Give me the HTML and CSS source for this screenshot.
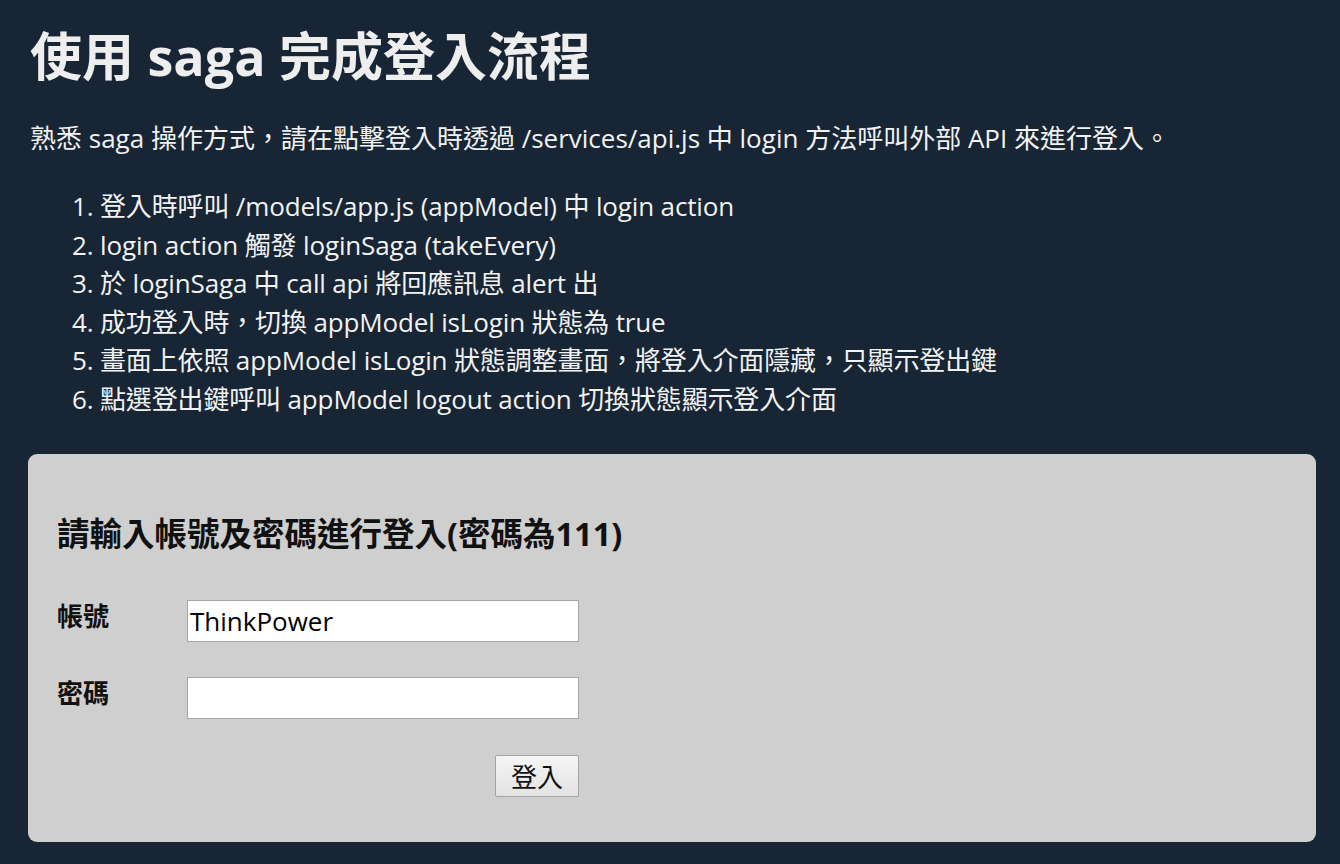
FILE: index.html
```html
<!DOCTYPE html>
<html lang="zh-Hant">
<head>
<meta charset="utf-8">
<title>使用 saga 完成登入流程</title>
<link rel="stylesheet" href="styles.css">
</head>
<body>
<main class="page">
  <h1 class="title">使用 saga 完成登入流程</h1>
  <p class="intro">熟悉 saga 操作方式，請在點擊登入時透過 /services/api.js 中 login 方法呼叫外部 API 來進行登入。</p>
  <ol class="steps">
    <li>登入時呼叫 /models/app.js (appModel) 中 login action</li>
    <li>login action 觸發 loginSaga (takeEvery)</li>
    <li>於 loginSaga 中 call api 將回應訊息 alert 出</li>
    <li>成功登入時，切換 appModel isLogin 狀態為 true</li>
    <li>畫面上依照 appModel isLogin 狀態調整畫面，將登入介面隱藏，只顯示登出鍵</li>
    <li>點選登出鍵呼叫 appModel logout action 切換狀態顯示登入介面</li>
  </ol>
  <section class="card">
    <h3 class="card-title">請輸入帳號及密碼進行登入(密碼為111)</h3>
    <form class="form">
      <div class="row">
        <label class="label" for="account">帳號</label>
        <input class="field" id="account" type="text" value="ThinkPower">
      </div>
      <div class="row">
        <label class="label" for="password">密碼</label>
        <input class="field" id="password" type="password">
      </div>
      <div class="actions">
        <button class="btn" type="button">登入</button>
      </div>
    </form>
  </section>
</main>
</body>
</html>
```

FILE: styles.css
```css
html, body {
  margin: 0;
  padding: 0;
  background: #172534;
}

body {
  font-family: "Open Sans", "Noto Sans CJK TC", sans-serif;
  font-size: 26px;
  color: #f2f2f2;
}

.page {
  padding: 24px 24px 23px 28px;
}

.title {
  margin: 0;
  font-size: 52px;
  line-height: 64px;
  font-weight: 700;
  color: #eeeeee;
  padding-left: 2px;
}

.intro {
  margin: 31px 0 0;
  line-height: 38px;
  padding-left: 2px;
}

.steps {
  margin: 30px 0 0;
  padding-left: 44px;
  list-style-position: inside;
}

.steps li {
  line-height: 38.6px;
  letter-spacing: -0.15px;
}

.card {
  margin-top: 35px;
  background: #cfcfcf;
  border-radius: 9px;
  padding: 60px 28px 45px;
  color: #111111;
}

.card-title {
  margin: 0;
  font-size: 32.5px;
  line-height: 40px;
  font-weight: 700;
  padding-left: 1px;
}

.form {
  margin-top: 46px;
  display: flex;
  flex-direction: column;
  gap: 35px;
  width: 523px;
}

.row {
  display: flex;
  align-items: flex-start;
}

.label {
  width: 130px;
  flex: none;
  font-weight: 700;
  line-height: 32px;
  padding-left: 1px;
}

.field {
  box-sizing: border-box;
  width: 393px;
  height: 42px;
  margin: 0;
  border: 1px solid #a6a6a6;
  background: #ffffff;
  padding: 0 2px;
  font-family: "Open Sans", "Noto Sans CJK TC", sans-serif;
  font-size: 26px;
  color: #000000;
  outline: none;
}

.actions {
  display: flex;
  justify-content: flex-end;
  margin-top: 1px;
}

.btn {
  box-sizing: border-box;
  height: 42px;
  width: 84px;
  padding: 0;
  margin: 0;
  border: 1px solid #a3a3a3;
  border-radius: 2px;
  background: linear-gradient(#f5f5f5, #e3e3e3);
  font-family: "Noto Sans CJK TC", sans-serif;
  font-size: 26px;
  color: #111111;
}
```
